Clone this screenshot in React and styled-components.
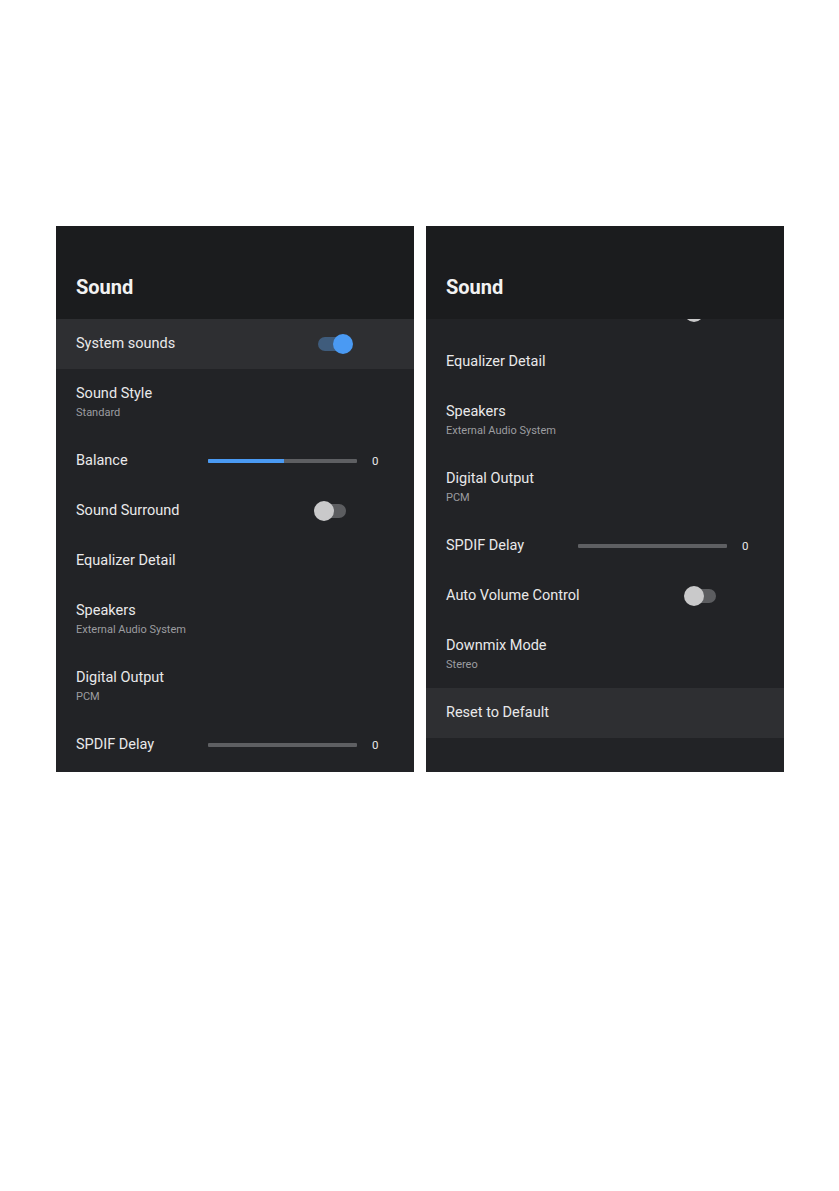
import React from 'react'
import styled, { createGlobalStyle } from 'styled-components';

const GlobalStyle = createGlobalStyle`
    html, body {
        margin: 0;
        padding: 0;
        background: #ffffff;
        font-family: Roboto, "Liberation Sans", sans-serif;
    }
`;

const firstList = [
    { type: 'toggle', title: 'System sounds', on: true, focused: true },
    { type: 'text', title: 'Sound Style', sub: 'Standard' },
    { type: 'slider', title: 'Balance', value: 0, fill: 0.51 },
    { type: 'toggle', title: 'Sound Surround', on: false },
    { type: 'text', title: 'Equalizer Detail' },
    { type: 'text', title: 'Speakers', sub: 'External Audio System' },
    { type: 'text', title: 'Digital Output', sub: 'PCM' },
    { type: 'slider', title: 'SPDIF Delay', value: 0, fill: 0 },
];

// scrolled down: the first row sits mostly under the header
const secondList = [
    { type: 'toggle', title: 'Sound Surround', on: false, hidden: true },
    { type: 'text', title: 'Equalizer Detail' },
    { type: 'text', title: 'Speakers', sub: 'External Audio System' },
    { type: 'text', title: 'Digital Output', sub: 'PCM' },
    { type: 'slider', title: 'SPDIF Delay', value: 0, fill: 0 },
    { type: 'toggle', title: 'Auto Volume Control', on: false },
    { type: 'text', title: 'Downmix Mode', sub: 'Stereo' },
    { type: 'text', title: 'Reset to Default', focused: true },
];

const Row = ({ item }) => (
    <Item $focused={item.focused} $tall={!!item.sub}>
        <Label $hidden={item.hidden}>
            <Title>{item.title}</Title>
            {item.sub && <Sub>{item.sub}</Sub>}
        </Label>
        {item.type === 'toggle' && (
            <Switch $on={item.on}>
                <Knob $on={item.on} />
            </Switch>
        )}
        {item.type === 'slider' && (
            <>
                <Track>
                    <Fill style={{ width: `${item.fill * 100}%` }} />
                </Track>
                <Value>{item.value}</Value>
            </>
        )}
    </Item>
)

const Panel = ({ items, offset }) => (
    <Screen>
        <Header>Sound</Header>
        <Viewport>
            <List $offset={offset}>
                {items.map((item, i) => <Row key={i} item={item} />)}
            </List>
        </Viewport>
    </Screen>
)

const App = () => {
    return (
        <Page>
            <GlobalStyle />
            <Panel items={firstList} offset={0} />
            <Panel items={secondList} offset={32} />
        </Page>
    )
}

const Page = styled.div`
    width: 839px;
    height: 1191px;
    box-sizing: border-box;
    padding: 226px 0 0 56px;
    display: flex;
    align-items: flex-start;
    gap: 12px;
`;

const Screen = styled.div`
    width: 358px;
    height: 546px;
    background: #222326;
    display: flex;
    flex-direction: column;
    overflow: hidden;
`;

const Header = styled.div`
    height: 93px;
    flex-shrink: 0;
    box-sizing: border-box;
    padding: 47px 0 0 20px;
    background: #1b1c1e;
    color: #f2f2f2;
    font-size: 20px;
    font-weight: 700;
    line-height: 28px;
`;

const Viewport = styled.div`
    flex: 1;
    overflow: hidden;
`;

const List = styled.div`
    display: flex;
    flex-direction: column;
    margin-top: ${p => -p.$offset}px;
`;

const Item = styled.div`
    height: ${p => p.$tall ? 67 : 50}px;
    flex-shrink: 0;
    box-sizing: border-box;
    padding: ${p => p.$tall ? '15px' : '0'} 0 0 20px;
    display: flex;
    align-items: ${p => p.$tall ? 'flex-start' : 'center'};
    background: ${p => p.$focused ? '#2e2f32' : 'transparent'};
`;

const Label = styled.div`
    width: 152px;
    flex-shrink: 0;
    display: flex;
    flex-direction: column;
    gap: 2px;
    visibility: ${p => p.$hidden ? 'hidden' : 'visible'};
`;

const Title = styled.div`
    color: #e9e9ea;
    font-size: 14.5px;
    line-height: 20px;
    white-space: nowrap;
`;

const Sub = styled.div`
    color: #9c9da0;
    font-size: 11px;
    line-height: 14px;
    white-space: nowrap;
`;

const Switch = styled.div`
    position: relative;
    width: 28px;
    height: 14px;
    margin-left: 90px;
    border-radius: 7px;
    background: ${p => p.$on ? '#3f5c7c' : '#5c5d60'};
`;

const Knob = styled.div`
    position: absolute;
    top: -3px;
    left: ${p => p.$on ? '15px' : '-4px'};
    width: 20px;
    height: 20px;
    border-radius: 50%;
    background: ${p => p.$on ? '#4a9af3' : '#c9c9ca'};
`;

const Track = styled.div`
    width: 149px;
    height: 4px;
    margin-left: -20px;
    background: #5e5f62;
    border-radius: 1px;
    overflow: hidden;
`;

const Fill = styled.div`
    height: 100%;
    background: #4a9af3;
`;

const Value = styled.div`
    margin-left: 15px;
    color: #e9e9ea;
    font-size: 11.5px;
`;

export default App
